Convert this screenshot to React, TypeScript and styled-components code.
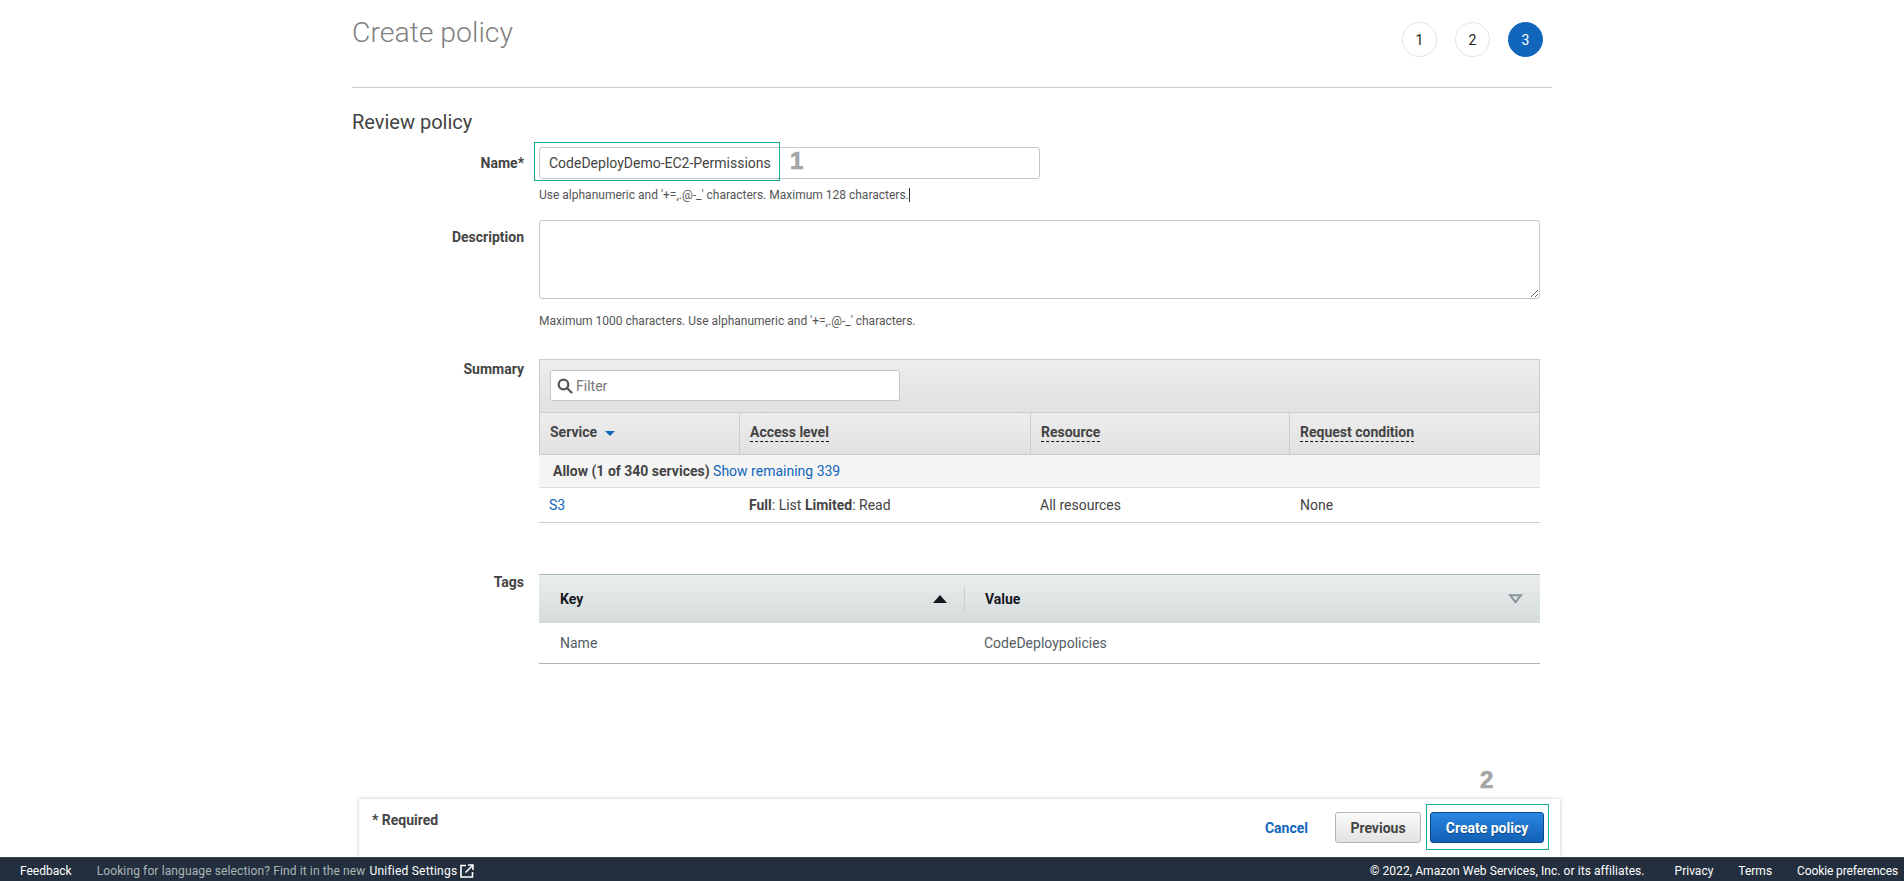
import React from "react";
import styled, { createGlobalStyle } from "styled-components";

const Global = createGlobalStyle`
  html, body { margin: 0; padding: 0; background: #fff; }
  body { font-family: Roboto, "Liberation Sans", sans-serif; font-size: 14px; color: #444; overflow: hidden; }
`;

const Page = styled.div`
  height: 881px;
  display: flex;
  flex-direction: column;
`;
const Main = styled.main`
  flex: 1;
  width: 1200px;
  margin-left: 352px;
`;
const Header = styled.header`
  box-sizing: border-box;
  height: 88px;
  padding-top: 15px;
  display: flex;
  justify-content: space-between;
  align-items: flex-start;
  border-bottom: 1px solid #ccc;
`;
const Title = styled.h1`
  margin: 0;
  font-size: 28.4px;
  line-height: 36px;
  font-weight: 300;
  color: #808080;
`;
const Steps = styled.div`
  display: flex;
  gap: 18px;
  margin: 7px 9px 0 0;
`;
const Step = styled.div<{ $active?: boolean }>`
  box-sizing: border-box;
  width: 35px;
  height: 35px;
  border-radius: 50%;
  display: flex;
  align-items: center;
  justify-content: center;
  font-size: 14px;
  color: ${(p) => (p.$active ? "#fff" : "#222")};
  background: ${(p) => (p.$active ? "#1166bb" : "#fff")};
  border: 1px solid ${(p) => (p.$active ? "#1166bb" : "#e1e4e5")};
`;
const Subtitle = styled.h2`
  margin: 22px 0 13px;
  font-size: 20px;
  line-height: 24px;
  font-weight: 400;
  color: #444;
`;
const Row = styled.div<{ $gap?: number }>`
  display: grid;
  grid-template-columns: 172px 1001px;
  column-gap: 15px;
  margin-top: ${(p) => p.$gap ?? 0}px;
`;
const Label = styled.label<{ $shift?: number }>`
  text-align: right;
  font-weight: 700;
  font-size: 14px;
  line-height: 20px;
  color: #444;
  margin-top: ${(p) => p.$shift ?? 0}px;
`;
const NameWrap = styled.div`
  position: relative;
  width: 501px;
`;
const NameInput = styled.input`
  box-sizing: border-box;
  display: block;
  width: 501px;
  height: 32px;
  padding: 0 9px;
  border: 1px solid #c6c6c6;
  border-radius: 3px;
  font: 400 14px Roboto, sans-serif;
  color: #444;
  outline: none;
`;
const GreenBox = styled.div<{ $w: number; $h: number; $l: number; $t: number }>`
  position: absolute;
  left: ${(p) => p.$l}px;
  top: ${(p) => p.$t}px;
  width: ${(p) => p.$w}px;
  height: ${(p) => p.$h}px;
  box-sizing: border-box;
  border: 1px solid #14ae8e;
  pointer-events: none;
`;
const Mark = styled.span<{ $l: number; $t: number }>`
  position: absolute;
  left: ${(p) => p.$l}px;
  top: ${(p) => p.$t}px;
  font: 700 24px/28px "Liberation Sans", sans-serif;
  -webkit-text-stroke: 0.7px #a6a6a6;
  color: #a6a6a6;
`;
const Hint = styled.div<{ $gap: number }>`
  margin-top: ${(p) => p.$gap}px;
  font-size: 12px;
  line-height: 16px;
  color: #555;
`;
const Caret = styled.span`
  border-right: 1px solid #333;
`;
const DescArea = styled.textarea`
  box-sizing: border-box;
  display: block;
  width: 1001px;
  height: 79px;
  border: 1px solid #c6c6c6;
  border-radius: 3px;
  outline: none;
  margin: 0;
`;
const Band = styled.div`
  box-sizing: border-box;
  height: 53px;
  padding: 10px;
  background: linear-gradient(#ededed, #e1e1e1);
  border: 1px solid #ccc;
  border-bottom: none;
`;
const FilterBox = styled.div`
  box-sizing: border-box;
  width: 350px;
  height: 31px;
  padding: 0 6px;
  display: flex;
  align-items: center;
  gap: 3px;
  background: #fff;
  border: 1px solid #c6c6c6;
  border-radius: 3px;
  color: #777;
  font-size: 14px;
`;
const HeadRow = styled.div`
  box-sizing: border-box;
  height: 43px;
  display: grid;
  grid-template-columns: 199px 291px 259px 1fr;
  background: linear-gradient(#ededed, #e1e1e1);
  border: 1px solid #ccc;
`;
const HeadCell = styled.div`
  padding: 0 0 3px 10px;
  display: flex;
  align-items: center;
  gap: 8px;
  font-weight: 700;
  color: #444;
  & + & { border-left: 1px solid #ccc; }
`;
const Dashed = styled.span`
  border-bottom: 1px dashed #111;
  line-height: 17px;
  margin-top: 2px;
`;
const SortDown = styled.span`
  width: 0;
  height: 0;
  margin-top: 2px;
  border-left: 5px solid transparent;
  border-right: 5px solid transparent;
  border-top: 5px solid #1166bb;
`;
const AllowRow = styled.div`
  box-sizing: border-box;
  height: 33px;
  padding-left: 14px;
  display: flex;
  align-items: center;
  background: #f5f5f5;
  border-bottom: 1px solid #ddd;
  font-weight: 700;
`;
const Link = styled.a`
  color: #1166bb;
  font-weight: 400;
`;
const BodyRow = styled.div`
  box-sizing: border-box;
  height: 35px;
  display: grid;
  grid-template-columns: 200px 291px 260px 1fr;
  align-items: center;
  border-bottom: 1px solid #ccc;
`;
const BodyCell = styled.div`
  padding-left: 10px;
  b { font-weight: 700; }
`;
const TagsHead = styled.div`
  box-sizing: border-box;
  height: 49px;
  display: grid;
  grid-template-columns: 425px 1fr;
  align-items: center;
  background: linear-gradient(#e9eded, #d5dbdb);
  border-top: 1px solid #aab7b8;
  font-weight: 700;
  color: #16191f;
`;
const TagsHeadCell = styled.div<{ $sep?: boolean }>`
  display: flex;
  justify-content: space-between;
  align-items: center;
  height: 24px;
  padding: 0 17px 0 ${(p) => (p.$sep ? 20 : 21)}px;
  border-left: ${(p) => (p.$sep ? "1px solid #c8cfcf" : "none")};
`;
const TriUp = styled.span`
  width: 0;
  height: 0;
  border-left: 7px solid transparent;
  border-right: 7px solid transparent;
  border-bottom: 8px solid #16191f;
`;
const TriDown = styled.svg`
  display: block;
`;
const TagsRow = styled.div`
  box-sizing: border-box;
  height: 41px;
  display: grid;
  grid-template-columns: 425px 1fr;
  align-items: center;
  border-bottom: 1px solid #aab7b8;
  color: #545b64;
`;
const TagCell = styled.div<{ $l: number }>`
  padding-left: ${(p) => p.$l}px;
`;
const ActionBar = styled.div`
  box-sizing: border-box;
  width: 1201px;
  height: 58px;
  margin-left: 359px;
  padding: 13px 16px 0 13px;
  display: flex;
  justify-content: space-between;
  background: #fff;
  box-shadow: 0 0 4px rgba(0, 0, 0, 0.22);
`;
const Required = styled.div`
  font-weight: 700;
  line-height: 16px;
  color: #444;
`;
const Actions = styled.div`
  display: flex;
  align-items: center;
  height: 31px;
`;
const Cancel = styled.a`
  font-weight: 700;
  color: #1166bb;
  margin-right: 27px;
`;
const PrevButton = styled.button`
  box-sizing: border-box;
  width: 86px;
  height: 31px;
  margin-right: 9px;
  padding: 0;
  border: 1px solid #b5b5b5;
  border-radius: 3px;
  background: linear-gradient(#fafafa, #e2e2e2);
  font: 700 14px Roboto, sans-serif;
  color: #444;
`;
const PrimaryWrap = styled.div`
  position: relative;
`;
const PrimaryButton = styled.button`
  display: block;
  box-sizing: border-box;
  width: 114px;
  height: 31px;
  padding: 0;
  border: 1px solid #0c4a8e;
  border-radius: 3px;
  background: linear-gradient(#2b86e4, #1160b4);
  font: 700 14px Roboto, sans-serif;
  color: #fff;
  text-shadow: 0 1px 1px rgba(0, 0, 0, 0.4);
`;
const Footer = styled.footer`
  box-sizing: border-box;
  height: 24px;
  padding: 2px 6px 0 20px;
  display: flex;
  align-items: center;
  justify-content: space-between;
  background: #232f3e;
  border-top: 1px solid #3a4554;
  font-family: Roboto, "Open Sans", sans-serif;
  font-size: 12px;
  color: #fff;
  white-space: nowrap;
`;
const FooterLeft = styled.div`
  display: flex;
  align-items: center;
`;
const FooterRight = styled.div`
  display: flex;
  gap: 25px;
`;
const Copyright = styled.span`
  margin-right: 5px;
  letter-spacing: 0.07px;
`;
const Cookie = styled.span`
  letter-spacing: -0.12px;
`;
const Muted = styled.span`
  margin-left: 25px;
  letter-spacing: 0.12px;
  color: #aab7b8;
`;
const Unified = styled.span`
  margin-left: 4px;
  letter-spacing: 0.22px;
`;
const ExtIcon = styled.svg`
  margin-left: 3px;
  display: block;
`;

export default function App() {
  return (
    <Page>
      <Global />
      <Main>
        <Header>
          <Title>Create policy</Title>
          <Steps>
            <Step>1</Step>
            <Step>2</Step>
            <Step $active>3</Step>
          </Steps>
        </Header>
        <Subtitle>Review policy</Subtitle>
        <Row>
          <Label $shift={6}>Name*</Label>
          <div>
            <NameWrap>
              <NameInput readOnly value="CodeDeployDemo-EC2-Permissions" />
              <GreenBox $l={-5} $t={-5} $w={246} $h={39} />
              <Mark $l={251} $t={0}>1</Mark>
            </NameWrap>
            <Hint $gap={8}>
              <Caret>Use alphanumeric and '+=,.@-_' characters. Maximum 128 characters.</Caret>
            </Hint>
          </div>
        </Row>
        <Row $gap={17}>
          <Label $shift={7}>Description</Label>
          <div>
            <DescArea />
            <Hint $gap={14}>Maximum 1000 characters. Use alphanumeric and '+=,.@-_' characters.</Hint>
          </div>
        </Row>
        <Row $gap={30}>
          <Label>Summary</Label>
          <div>
            <Band>
              <FilterBox>
                <svg width="16" height="16" viewBox="0 0 16 16" fill="none" stroke="#555" strokeWidth="2.2">
                  <circle cx="6.5" cy="6.5" r="4.8" />
                  <path d="M10 10l4.5 4.5" strokeLinecap="round" />
                </svg>
                Filter
              </FilterBox>
            </Band>
            <HeadRow>
              <HeadCell>Service <SortDown /></HeadCell>
              <HeadCell><Dashed>Access level</Dashed></HeadCell>
              <HeadCell><Dashed>Resource</Dashed></HeadCell>
              <HeadCell><Dashed>Request condition</Dashed></HeadCell>
            </HeadRow>
            <AllowRow>Allow (1 of 340 services)&nbsp;<Link>Show remaining 339</Link></AllowRow>
            <BodyRow>
              <BodyCell as={Link}>S3</BodyCell>
              <BodyCell><b>Full</b>: List <b>Limited</b>: Read</BodyCell>
              <BodyCell>All resources</BodyCell>
              <BodyCell>None</BodyCell>
            </BodyRow>
          </div>
        </Row>
        <Row $gap={51}>
          <Label $shift={-2}>Tags</Label>
          <div>
            <TagsHead>
              <TagsHeadCell>Key <TriUp /></TagsHeadCell>
              <TagsHeadCell $sep>
                Value
                <TriDown width="15" height="10" viewBox="0 0 15 10">
                  <path d="M2 1.2h11L7.5 8.2z" fill="#dfe4e4" stroke="#879596" strokeWidth="2" />
                </TriDown>
              </TagsHeadCell>
            </TagsHead>
            <TagsRow>
              <TagCell $l={21}>Name</TagCell>
              <TagCell $l={20}>CodeDeploypolicies</TagCell>
            </TagsRow>
          </div>
        </Row>
      </Main>
      <ActionBar>
        <Required>* Required</Required>
        <Actions>
          <Cancel>Cancel</Cancel>
          <PrevButton>Previous</PrevButton>
          <PrimaryWrap>
            <PrimaryButton>Create policy</PrimaryButton>
            <GreenBox $l={-4} $t={-8} $w={123} $h={46} />
            <Mark $l={50} $t={-46}>2</Mark>
          </PrimaryWrap>
        </Actions>
      </ActionBar>
      <Footer>
        <FooterLeft>
          <span>Feedback</span>
          <Muted>Looking for language selection? Find it in the new</Muted>
          <Unified>Unified Settings</Unified>
          <ExtIcon width="14" height="14" viewBox="0 0 14 14" fill="none" stroke="#fff" strokeWidth="1.6">
            <path d="M6 1.5H1v11.5h11.5V8" />
            <path d="M5.5 8.5L12.5 1.5M8 1h5v5" />
          </ExtIcon>
        </FooterLeft>
        <FooterRight>
          <Copyright>© 2022, Amazon Web Services, Inc. or its affiliates.</Copyright>
          <span>Privacy</span>
          <span>Terms</span>
          <Cookie>Cookie preferences</Cookie>
        </FooterRight>
      </Footer>
    </Page>
  );
}
